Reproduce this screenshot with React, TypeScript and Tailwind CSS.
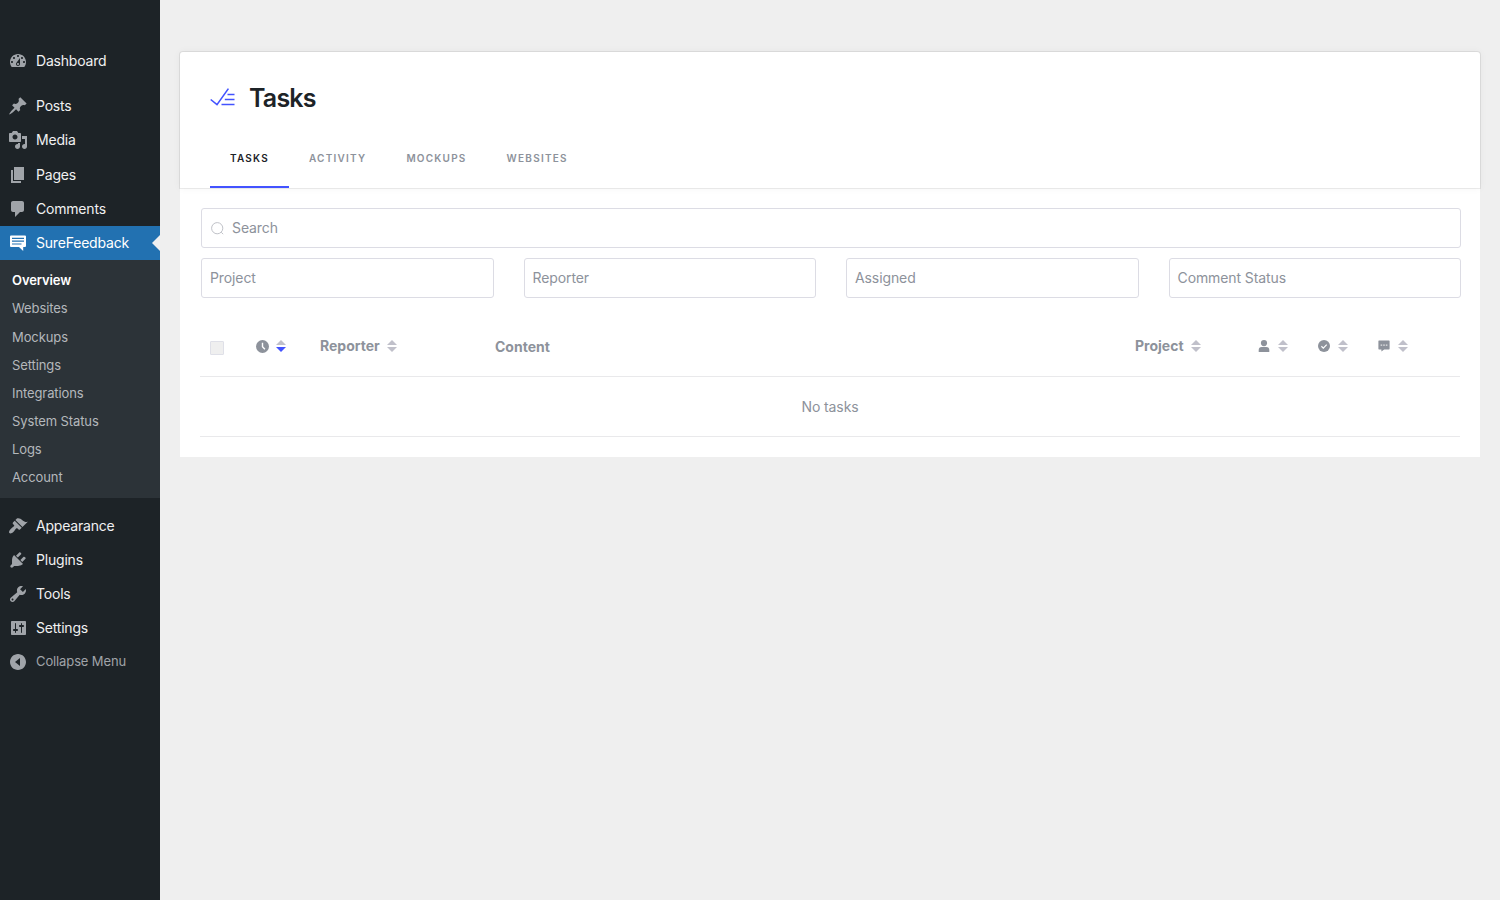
import { ReactNode } from 'react'
import clsx from 'clsx'

type MenuItem = {
  text: string
  path: string
}

const contentMenu: MenuItem[] = [
  {
    text: 'Posts',
    path: 'M10.44 3.02l1.82-1.82 6.36 6.35-1.83 1.82c-1.05-.68-2.48-.57-3.41.36l-.75.75c-.92.93-1.04 2.35-.35 3.41l-1.83 1.82-2.41-2.41-2.8 2.79c-.42.42-3.38 2.71-3.8 2.29s1.86-3.39 2.28-3.81l2.79-2.79L4.1 9.36l1.83-1.82c1.05.69 2.48.57 3.4-.36l.75-.75c.93-.92 1.05-2.35.36-3.41z',
  },
  {
    text: 'Media',
    path: 'M13 11V4c0-.55-.45-1-1-1h-1.67L9 1H5L3.67 3H2c-.55 0-1 .45-1 1v7c0 .55.45 1 1 1h10c.55 0 1-.45 1-1zM7 4.5c1.38 0 2.5 1.12 2.5 2.5S8.38 9.5 7 9.5 4.5 8.38 4.5 7 5.62 4.5 7 4.5zM14 6h5v10.5c0 1.38-1.12 2.5-2.5 2.5S14 17.88 14 16.5s1.12-2.5 2.5-2.5c.17 0 .34.02.5.05V9h-3V6zm-4 8.05V13h2v3.5c0 1.38-1.12 2.5-2.5 2.5S7 17.88 7 16.5 8.12 14 9.5 14c.17 0 .34.02.5.05z',
  },
  {
    text: 'Pages',
    path: 'M6 15V2h10v13H6zm-1 1h8v2H3V5h2v11z',
  },
  {
    text: 'Comments',
    path: 'M5 2h9c1.1 0 2 .9 2 2v7c0 1.1-.9 2-2 2h-2l-5 5v-5H5c-1.1 0-2-.9-2-2V4c0-1.1.9-2 2-2z',
  },
]

const adminMenu: MenuItem[] = [
  {
    text: 'Appearance',
    path: 'M14.48 11.06L7.41 3.99l1.5-1.5c.5-.56 2.3-.47 3.51.32 1.21.8 1.43 1.28 2.91 2.1 1.18.64 2.45 1.26 4.45.85zm-.71.71L6.7 4.7 4.93 6.47c-.39.39-.39 1.02 0 1.41l1.06 1.06c.39.39.39 1.03 0 1.42-.6.6-1.43 1.11-2.21 1.69-.35.26-.7.53-1.01.84C1.43 14.23.4 16.08 1.4 17.07c.99 1 2.84-.03 4.18-1.36.31-.31.58-.66.85-1.02.57-.78 1.08-1.61 1.69-2.21.39-.39 1.02-.39 1.41 0l1.06 1.06c.39.39 1.02.39 1.41 0z',
  },
  {
    text: 'Plugins',
    path: 'M13.11 4.36L9.87 7.6 8 5.73l3.24-3.24c.35-.34 1.05-.2 1.56.32.52.51.66 1.21.31 1.55zm-8 1.77l.91-1.12 9.01 9.01-1.19.84c-.71.71-2.63 1.16-3.82 1.16H6.14L4.9 17.26c-.59.59-1.54.59-2.12 0-.59-.58-.59-1.53 0-2.12l1.24-1.24v-3.88c0-1.13.4-3.19 1.09-3.89zm7.26 3.97l3.24-3.24c.34-.35 1.04-.21 1.55.31.52.51.66 1.21.31 1.55l-3.24 3.25z',
  },
  {
    text: 'Tools',
    path: 'M16.68 9.77c-1.34 1.34-3.3 1.67-4.95.99l-5.41 6.52c-.99.99-2.59.99-3.58 0s-.99-2.59 0-3.57l6.52-5.42c-.68-1.65-.35-3.61.99-4.95 1.28-1.28 3.12-1.62 4.72-1.06l-2.89 2.89 2.82 2.82 2.86-2.87c.53 1.58.18 3.39-1.08 4.65zM3.81 16.21c.4.39 1.04.39 1.43 0 .4-.4.4-1.04 0-1.43-.39-.4-1.03-.4-1.43 0-.39.39-.39 1.03 0 1.43z',
  },
  {
    text: 'Settings',
    path: 'M18 16V4c0-.55-.45-1-1-1H4c-.55 0-1 .45-1 1v12c0 .55.45 1 1 1h13c.55 0 1-.45 1-1zM8 11h1c.55 0 1 .45 1 1s-.45 1-1 1H8v1.5c0 .28-.22.5-.5.5s-.5-.22-.5-.5V13H6c-.55 0-1-.45-1-1s.45-1 1-1h1V5.5c0-.28.22-.5.5-.5s.5.22.5.5V11zm5-2h-1c-.55 0-1-.45-1-1s.45-1 1-1h1V5.5c0-.28.22-.5.5-.5s.5.22.5.5V7h1c.55 0 1 .45 1 1s-.45 1-1 1h-1v5.5c0 .28-.22.5-.5.5s-.5-.22-.5-.5V9z',
  },
]

const dashboardPath =
  'M3.76 16h12.48c1.1-1.37 1.76-3.11 1.76-5 0-4.42-3.58-8-8-8s-8 3.58-8 8c0 1.89.66 3.63 1.76 5zM10 4c.55 0 1 .45 1 1s-.45 1-1 1-1-.45-1-1 .45-1 1-1zM6 6c.55 0 1 .45 1 1s-.45 1-1 1-1-.45-1-1 .45-1 1-1zm8 0c.55 0 1 .45 1 1s-.45 1-1 1-1-.45-1-1 .45-1 1-1zm-5.37 5.55L12 7v6c0 1.1-.9 2-2 2s-2-.9-2-2c0-.57.24-1.08.63-1.45zM4 10c.55 0 1 .45 1 1s-.45 1-1 1-1-.45-1-1 .45-1 1-1zm12 0c.55 0 1 .45 1 1s-.45 1-1 1-1-.45-1-1 .45-1 1-1zm-5 3c0-.55-.45-1-1-1s-1 .45-1 1 .45 1 1 1 1-.45 1-1z'

const submenu = [
  'Overview',
  'Websites',
  'Mockups',
  'Settings',
  'Integrations',
  'System Status',
  'Logs',
  'Account',
]

const tabs = ['Tasks', 'Activity', 'Mockups', 'Websites']

const filters = ['Project', 'Reporter', 'Assigned', 'Comment Status']

function MenuIcon({ path }: { path: string }) {
  return (
    <svg viewBox="0 0 20 20" className="ml-2 size-5 shrink-0 fill-[#a0a4a9]">
      <path fillRule="evenodd" d={path} />
    </svg>
  )
}

function MenuLink({ text, path }: MenuItem) {
  return (
    <a
      href="#"
      className="flex h-[34px] items-center gap-2 text-sm tracking-[-0.2px] text-[#f0f0f1]"
    >
      <MenuIcon path={path} />
      {text}
    </a>
  )
}

function Sidebar() {
  return (
    <nav className="w-40 shrink-0 bg-[#1d2327] pt-11">
      <MenuLink text="Dashboard" path={dashboardPath} />
      <div className="mt-[11px] flex h-[137px] flex-col justify-between">
        {contentMenu.map((item) => (
          <MenuLink key={item.text} {...item} />
        ))}
      </div>

      <a
        href="#"
        className="relative flex h-[34px] items-center gap-2 bg-[#2271b1] text-sm tracking-[-0.2px] text-white"
      >
        <svg viewBox="0 0 20 20" className="ml-2 size-5 fill-white">
          <path
            fillRule="evenodd"
            d="M3 2.5h14a1 1 0 0 1 1 1V13a1 1 0 0 1-1 1h-1.8v4l-4.2-4H3a1 1 0 0 1-1-1V3.500a1 1 0 0 1 1-1zm1 2.300v1.100h12V4.800zm0 2.800v1.100h12V7.600zm0 2.800v1.100h9.500v-1.100z"
          />
        </svg>
        SureFeedback
        <span className="absolute right-0 top-[9px] border-y-8 border-r-8 border-y-transparent border-r-[#f0f0f1]" />
      </a>

      <ul className="h-[238px] bg-[#2c3338] pl-3 pt-[7px]">
        {submenu.map((text, index) => (
          <li
            key={text}
            className={clsx(
              'flex h-[28.14px] items-center text-[13px] tracking-[-0.1px]',
              index === 0 ? 'font-semibold text-white' : 'text-[#b4b8bc]',
            )}
          >
            {text}
          </li>
        ))}
      </ul>

      <div className="mt-[11px]">
        {adminMenu.map((item) => (
          <MenuLink key={item.text} {...item} />
        ))}
      </div>
      <button className="flex h-[34px] items-center gap-2 text-[13px] tracking-[-0.12px] text-[#a0a4a9]">
        <MenuIcon path="M10 2c4.42 0 8 3.58 8 8s-3.58 8-8 8-8-3.58-8-8 3.58-8 8-8zm2 12V6l-5 4z" />
        Collapse Menu
      </button>
    </nav>
  )
}

function SortArrows({ active = false }: { active?: boolean }) {
  return (
    <svg viewBox="0 0 10 12" className="h-3 w-2.5">
      <path d="M5 0l5 5H0z" fill="#c0c0ca" />
      <path d="M5 12l5-5H0z" fill={active ? '#4353ff' : '#c0c0ca'} />
    </svg>
  )
}

function HeaderCell({
  className,
  active,
  children,
}: {
  className: string
  active?: boolean
  children: ReactNode
}) {
  return (
    <div className={clsx('flex items-center', className)}>
      {children}
      <SortArrows active={active} />
    </div>
  )
}

function PageHeader() {
  return (
    <header className="relative h-[136px] rounded-t-[3px] bg-white px-[30px] shadow-[0_0_0_1px_rgba(0,0,0,0.07),0_0_8px_rgba(0,0,0,0.05)]">
      <div className="flex h-[92px] items-center gap-3.5">
        <svg
          viewBox="0 0 25 20"
          className="h-5 w-[25px]"
          fill="none"
          stroke="#4353ff"
          strokeWidth="1.6"
        >
          <path d="M.7 11.500L7 16.700 18.400.6M17.500 6.500h7M14.800 11.500h9.700M11.500 16.500h13" />
        </svg>
        <h1 className="pt-px text-[25px] font-semibold tracking-[-0.8px] text-[#1d2327]">
          Tasks
        </h1>
      </div>
      <div className="flex h-11">
        {tabs.map((tab, index) => (
          <button
            key={tab}
            className={clsx(
              'flex items-start border-b-2 px-5 pt-[7px] text-[10px] leading-[15px] font-semibold uppercase tracking-[1.23px]',
              index === 0
                ? 'border-[#4353ff] text-[#1d2327]'
                : 'border-transparent text-[#8d929b]',
            )}
          >
            {tab}
          </button>
        ))}
      </div>
    </header>
  )
}

function TaskTable() {
  return (
    <div className="mt-5 text-sm text-[#8d929b]">
      <div className="flex h-[59px] items-center border-b border-[#e9e9eb] pb-0.5 font-bold">
        <div className="w-[56px] pl-2.5 pt-1">
          <div className="size-3.5 rounded-[1px] border border-[#dfe0e8] bg-[#efefef]" />
        </div>
        <HeaderCell className="w-16 gap-[7px]" active>
          <svg viewBox="0 0 13 13" className="size-[13px]">
            <circle cx="6.5" cy="6.5" r="6.5" fill="#8d929b" />
            <path d="M6.5 2.8v4l2.4 2.4" fill="none" stroke="#fff" strokeWidth="1.4" />
          </svg>
        </HeaderCell>
        <HeaderCell className="w-[175px] gap-[7px]">Reporter</HeaderCell>
        <div className="w-[640px] pt-0.5">Content</div>
        <HeaderCell className="w-[123px] gap-[7px]">Project</HeaderCell>
        <HeaderCell className="w-[60px] gap-2">
          <svg viewBox="0 0 12 12" className="size-3 fill-[#8d929b]">
            <circle cx="6" cy="3.1" r="3.1" />
            <path d="M.7 12v-2a3 3 0 0 1 3-3h4.6a3 3 0 0 1 3 3v2z" />
          </svg>
        </HeaderCell>
        <HeaderCell className="w-[60px] gap-2">
          <svg viewBox="0 0 12 12" className="size-3">
            <circle cx="6" cy="6" r="6" fill="#8d929b" />
            <path d="M3.4 6.3l1.9 1.8 3.4-3.4" fill="none" stroke="#fff" strokeWidth="1.2" />
          </svg>
        </HeaderCell>
        <HeaderCell className="gap-2">
          <svg viewBox="0 0 12 12" className="size-3">
            <path
              d="M1 .5h10a.6.6 0 0 1 .6.6v7.7a.6.6 0 0 1-.6.6H6.2L3.4 11.5V9.4H1a.6.6 0 0 1-.6-.6V1.1A.6.6 0 0 1 1 .5z"
              fill="#8d929b"
            />
            <path d="M2.6 4.4h1.6v1.4H2.6zM5.2 4.4h1.6v1.4H5.2zM7.8 4.4h1.6v1.4H7.8z" fill="#fff" opacity=".75" />
          </svg>
        </HeaderCell>
      </div>
      <p className="flex h-[60px] items-center justify-center border-b border-[#e9e9eb] tracking-[-0.1px]">
        No tasks
      </p>
    </div>
  )
}

export default function App() {
  return (
    <div className="flex h-screen bg-[#efefef] font-[Inter,sans-serif]">
      <Sidebar />
      <main className="flex-1 px-5 pt-[52px]">
        <PageHeader />
        <section className="h-[269px] bg-white px-5 pt-5 text-sm text-[#8d929b]">
          <div className="ml-px -mr-px flex h-10 items-center gap-2 rounded-[3px] border border-[#dcdce4] pl-[9px] tracking-[-0.1px]">
            <svg
              viewBox="0 0 13 13"
              className="size-[13px]"
              fill="none"
              stroke="#c0c2c8"
            >
              <circle cx="6.2" cy="6.2" r="5.6" />
              <path d="M10.2 10.2l2 2" />
            </svg>
            Search
          </div>
          <div className="ml-px -mr-px mt-2.5 grid grid-cols-4 gap-[30px] tracking-[-0.1px]">
            {filters.map((filter) => (
              <div
                key={filter}
                className="flex h-10 items-center rounded-[3px] border border-[#dcdce4] pl-2"
              >
                {filter}
              </div>
            ))}
          </div>
          <TaskTable />
        </section>
      </main>
    </div>
  )
}
